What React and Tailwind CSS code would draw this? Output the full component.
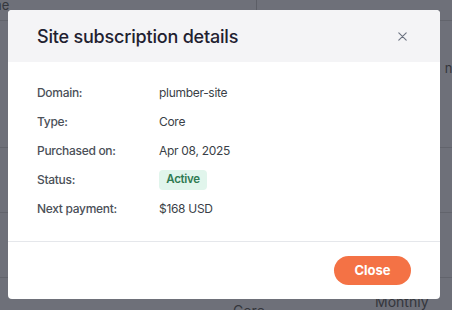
import React from "react";

function XIcon() {
  return (
    <svg width="9" height="9" viewBox="0 0 9 9" fill="none" stroke="#6b7280" strokeWidth="1.1" strokeLinecap="round">
      <path d="M0.8 0.8L8.2 8.2M8.2 0.8L0.8 8.2" />
    </svg>
  );
}

const rows = [
  ["Domain:", "plumber-site"],
  ["Type:", "Core"],
  ["Purchased on:", "Apr 08, 2025"],
  ["Status:", null],
  ["Next payment:", "$168 USD"],
];

export default function App() {
  return (
    <div className="relative w-[452px] h-[310px] overflow-hidden bg-[#6e7079]" style={{ fontFamily: "Inter, 'Noto Sans', sans-serif" }}>
      {/* background page */}
      <div className="flex flex-col text-[#34363c] text-[13px]">
        <div className="h-[21px] flex border-b border-[#62646c]">
          <div className="w-[263px] border-r border-[#5c5e66] leading-[10px] -ml-[6px]">ne</div>
          <div className="flex-1" />
        </div>
        <div className="h-[127px] border-b border-[#62646c] flex justify-end items-start pt-[38px]">
          <span className="-mr-[8px]">ne</span>
        </div>
        <div className="h-[65px] border-b border-[#62646c]" />
        <div className="h-[65px] border-b border-[#62646c]" />
        <div className="h-[40px] flex">
          <div className="w-[233px]" />
          <div className="w-[142px] pt-[22px] text-[14px]">Core</div>
          <div className="pt-[13px] text-[14px]">Monthly</div>
        </div>
      </div>

      {/* overlay + modal */}
      <div className="absolute inset-0 pl-[8px] pt-[10px]">
        <div className="w-[432px] h-[289px] bg-white rounded-[4px] overflow-hidden flex flex-col">
          <div className="h-[52px] bg-[#f4f4f6] flex items-center justify-between pl-[29px] pr-[33px]">
            <span className="text-[18px] text-[#1f2130] font-medium tracking-[-0.2px]">Site subscription details</span>
            <XIcon />
          </div>
          <div className="flex flex-col gap-[9px] pt-[21px] pb-[22px] px-[29px] border-b border-[#e5e7eb]">
            {rows.map(([label, value]) => (
              <div key={label} className="h-[20px] flex items-center text-[12px] tracking-[-0.3px]">
                <span className="w-[122px] text-[#4b5058] font-medium">{label}</span>
                {value ? (
                  <span className="text-[#3a3f47]">{value}</span>
                ) : (
                  <span className="h-[20px] w-[48px] flex items-center justify-center rounded-[4px] bg-[#e1f5ec] text-[#2f7a52] font-semibold text-[11.5px]">Active</span>
                )}
              </div>
            ))}
          </div>
          <div className="flex-1 flex justify-end items-start pt-[14px] pr-[29px]">
            <button className="w-[77px] h-[29px] rounded-full bg-[#f47245] text-white text-[13px] font-bold">Close</button>
          </div>
        </div>
      </div>
    </div>
  );
}
